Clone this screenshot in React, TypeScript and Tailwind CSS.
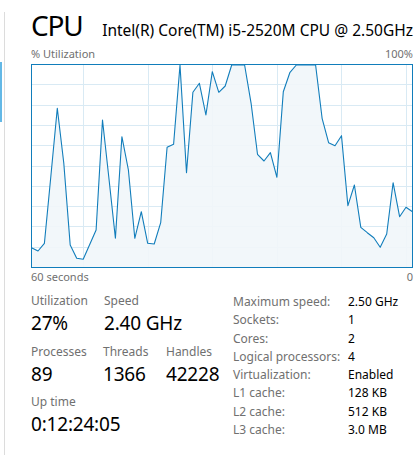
import React from 'react';

// y positions (px inside the graph box, 0 = top = 100%) read per second
const samples = [
    247.7, 251, 243.3, 175.8, 108.3, 163.3, 245, 258.3, 259.3, 244.7, 230, 120,
    179, 238.3, 136.7, 170, 238.3, 211.7, 243.3, 244, 222.7, 147.3, 144.3, 65,
    172.7, 92.3, 83.3, 115, 71.7, 92.3, 86, 65, 65, 65, 103.3, 154.3, 161, 152.7,
    177.3, 91.7, 72.7, 65, 65, 65, 65, 118.3, 142.7, 145.7, 135.7, 205.7, 185,
    227.3, 232.7, 237.7, 247.3, 234, 182.7, 216.7, 207.3, 211.7,
].map((y) => Math.max(1, y - 64));

const W = 381;
const H = 203;

function UsageGraph() {
    const step = W / (samples.length - 1);
    const pts = samples.map((y, i) => `${(0.5 + i * step).toFixed(1)},${y.toFixed(1)}`);
    const line = pts.join(' ');
    const area = `0.5,${H} ${line} ${W + 0.5},${H}`;
    const rows = Array.from({ length: 9 }, (_, i) => Math.round((i + 1) * 20.3) + 0.5);
    const cols = Array.from({ length: 6 }, (_, i) => Math.round(52 + i * 64.6) + 0.5);

    return (
        <svg width={W + 1} height={H + 1} viewBox={`0 0 ${W + 1} ${H + 1}`} className="mt-[3px] block">
            {rows.map((y) => (
                <line key={`r${y}`} x1="0" x2={W} y1={y} y2={y} stroke="#d9eaf4" />
            ))}
            {cols.map((x) => (
                <line key={`c${x}`} x1={x} x2={x} y1="0" y2={H} stroke="#d9eaf4" />
            ))}
            <polygon points={area} fill="#f1f6fa" fillOpacity="0.9" />
            <polyline points={line} fill="none" stroke="#117dbb" strokeWidth="1.1" strokeLinejoin="round" />
            <rect x="0.5" y="0.5" width={W} height={H} fill="none" stroke="#117dbb" />
        </svg>
    );
}

function Stat({ label, value, className }: { label: string; value: string; className?: string }) {
    return (
        <div className={className}>
            <div className="text-[12px] leading-[16px] text-[#707070]">{label}</div>
            <div className="text-[19px] leading-[29px] tracking-[-0.2px] text-black">{value}</div>
        </div>
    );
}

const specs: [string, string][] = [
    ['Maximum speed:', '2.50 GHz'],
    ['Sockets:', '1'],
    ['Cores:', '2'],
    ['Logical processors:', '4'],
    ['Virtualization:', 'Enabled'],
    ['L1 cache:', '128 KB'],
    ['L2 cache:', '512 KB'],
    ['L3 cache:', '3.0 MB'],
];

export default function App() {
    return (
        <div className="flex h-[463px] w-[417px] overflow-hidden bg-white font-['Noto_Sans',sans-serif]">
            <div className="w-[4px] shrink-0">
                <div className="mt-[62px] h-[60px] w-[2px] bg-[#63b8e6]" />
            </div>

            <div className="mt-[12px] h-[443px] flex-1 border-l border-[#dcdcdc] pl-[26px] pr-[5px]">
                <div className="flex h-[26px] items-baseline justify-between">
                    <span className="text-[28px] leading-[26px] tracking-[-1.2px] text-black">CPU</span>
                    <span className="text-[15.5px] leading-[26px] text-black">
                        Intel(R) Core(TM) i5-2520M CPU @ 2.50GHz
                    </span>
                </div>

                <div className="mt-[9px] flex justify-between text-[11px] leading-[14px] text-[#707070]">
                    <span>% Utilization</span>
                    <span>100%</span>
                </div>

                <UsageGraph />

                <div className="mt-[2px] flex justify-between text-[11px] leading-[14px] text-[#707070]">
                    <span>60 seconds</span>
                    <span>0</span>
                </div>

                <div className="mt-[9px] flex">
                    <div className="w-[202px] shrink-0">
                        <div className="flex">
                            <Stat label="Utilization" value="27%" className="w-[73px]" />
                            <Stat label="Speed" value="2.40 GHz" />
                        </div>
                        <div className="mt-[6px] flex">
                            <Stat label="Processes" value="89" className="w-[72px]" />
                            <Stat label="Threads" value="1366" className="w-[63px]" />
                            <Stat label="Handles" value="42228" />
                        </div>
                        <Stat label="Up time" value="0:12:24:05" className="mt-[5px]" />
                    </div>

                    <div className="grid grid-cols-[115px_auto] text-[12px] leading-[17.8px]">
                        {specs.map(([k, v]) => (
                            <React.Fragment key={k}>
                                <span className="text-[#707070]">{k}</span>
                                <span className="text-black">{v}</span>
                            </React.Fragment>
                        ))}
                    </div>
                </div>
            </div>
        </div>
    );
}
